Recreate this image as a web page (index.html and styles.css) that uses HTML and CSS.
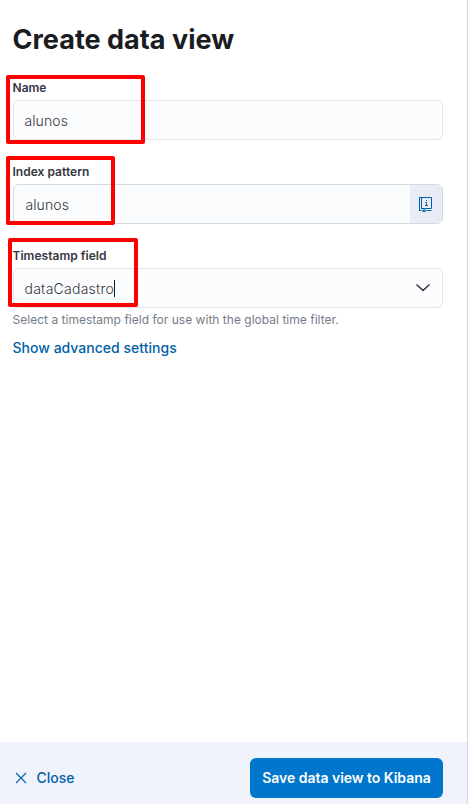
FILE: index.html
```html
<!DOCTYPE html>
<html lang="en">
<head>
<meta charset="utf-8">
<title>Create data view</title>
<link rel="stylesheet" href="styles.css">
</head>
<body>
<div class="flyout">
  <main class="content">
    <h1 class="title">Create data view</h1>
    <div class="field">
      <label class="label">Name</label>
      <div class="control"><span class="value">alunos</span></div>
      <div class="mark mark-name"></div>
    </div>
    <div class="field">
      <label class="label">Index pattern</label>
      <div class="control control-group">
        <span class="value">alunos</span>
        <span class="append">
          <svg width="14" height="17" viewBox="0 0 14 17" fill="none" stroke="#0061a6">
            <path d="M.5 15V1.500h12v11H2M2.500 1.500v11M.5 14.500h2M7.500 14.500h5"/>
            <path d="M3.500 13.500h3v3l-1.500-1-1.500 1z" fill="#0061a6" stroke="none"/>
            <path d="M6 6.500h1.500v3M6 9.500h3M7 4.500h1"/>
          </svg>
        </span>
      </div>
      <div class="mark mark-index"></div>
    </div>
    <div class="field field-time">
      <label class="label">Timestamp field</label>
      <div class="control">
        <span class="value time-value">dataCadastro</span><span class="caret"></span>
        <svg class="chevron" width="14" height="8" viewBox="0 0 14 8" fill="none" stroke="#343741" stroke-width="1.600" stroke-linecap="round" stroke-linejoin="round"><path d="M1 1l6 5.500L13 1"/></svg>
      </div>
      <div class="mark mark-time"></div>
    </div>
    <p class="help">Select a timestamp field for use with the global time filter.</p>
    <a class="advanced">Show advanced settings</a>
  </main>
  <footer class="footer">
    <a class="close">
      <svg width="12" height="12" viewBox="0 0 12 12" fill="none" stroke="#0061a6" stroke-width="1.100"><path d="M1 1l10 10M11 1L1 11"/></svg>
      <span class="close-text">Close</span>
    </a>
    <button class="save">Save data view to Kibana</button>
  </footer>
</div>
</body>
</html>
```
FILE: styles.css
```css
* { box-sizing: border-box; }
body {
  margin: 0;
  background: #fff;
  color: #343741;
  font-family: Inter, "Liberation Sans", sans-serif;
}
.flyout {
  width: 468px;
  height: 804px;
  border-right: 1px solid #d3dae6;
  display: flex;
  flex-direction: column;
}
.content { flex: 1; padding: 23px 24px 0 12.5px; }
.title {
  margin: 0 0 23px;
  height: 34px;
  font-size: 27px;
  line-height: 34px;
  font-weight: 700;
  letter-spacing: 0.02px;
  color: #1a1c21;
  white-space: nowrap;
}
.field { position: relative; height: 60px; margin-bottom: 24px; }
.field-time { margin-bottom: 4px; }
.label {
  display: block;
  height: 20px;
  font-size: 12px;
  line-height: 16px;
  font-weight: 600;
  letter-spacing: 0.02px;
}
.control {
  display: flex;
  align-items: center;
  width: 430px;
  height: 40px;
  margin-left: 0.5px;
  padding-left: 10.5px;
  border: 1px solid #e2e4f0;
  border-radius: 6px;
  background: #fbfcfd;
  font-size: 14px;
  font-weight: 300;
}
.value { line-height: 20px; padding-top: 2px; letter-spacing: 0.08px; }
.time-value { letter-spacing: 0.25px; }
.control-group { border-color: #d3dae6; padding-left: 11.5px; overflow: hidden; }
.append {
  display: flex;
  align-items: center;
  justify-content: center;
  width: 32px;
  height: 38px;
  margin-left: auto;
  background: #e9ecf5;
}
.caret { width: 1px; height: 17px; background: #1a1c21; }
.chevron { margin-left: auto; margin-right: 12px; }
.mark { position: absolute; height: 69px; border: 4px solid #f00; border-radius: 2px; }
.mark-name { left: -6.5px; top: -5px; width: 139px; }
.mark-index { left: -6.5px; top: -8px; width: 109px; }
.mark-time { left: -4.5px; top: -10px; width: 130px; }
.help { margin: 0; height: 17px; font-size: 12px; line-height: 16px; letter-spacing: 0.02px; color: #757c89; }
.advanced { display: block; margin-top: 9px; font-size: 14px; line-height: 20px; font-weight: 500; letter-spacing: 0.02px; color: #0061a6; }
.footer {
  display: flex;
  align-items: center;
  justify-content: space-between;
  height: 62px;
  padding: 10px 24px 0 15px;
  background: #f0f3fb;
}
.close { display: flex; align-items: center; gap: 9.5px; font-size: 14px; line-height: 20px; font-weight: 500; color: #0061a6; }
.close-text { margin-top: -1px; }
.save {
  width: 193px;
  height: 40px;
  padding: 0 0 2px;
  border: 0;
  border-radius: 6px;
  background: #0077cc;
  color: #fff;
  font: 600 14px Inter, "Liberation Sans", sans-serif;
  letter-spacing: -0.03px;
  white-space: nowrap;
}
```
